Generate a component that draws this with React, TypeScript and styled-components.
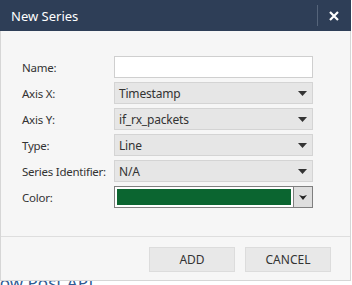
import { Fragment } from 'react';
import styled, { createGlobalStyle } from 'styled-components';

const GlobalStyle = createGlobalStyle`
  body {
    margin: 0;
    background: #ffffff;
    font-family: 'Noto Sans', 'Open Sans', sans-serif;
  }
`;

const Page = styled.div`
  position: relative;
  width: 352px;
  height: 285px;
  overflow: hidden;
  background: #ffffff;
`;

const PageLink = styled.a`
  display: block;
  white-space: nowrap;
  padding: 271px 0 0 0;
  margin-left: -20px;
  font-size: 17px;
  color: #2f5b93;
  text-decoration: none;
`;

const Dialog = styled.div`
  position: absolute;
  top: 0;
  left: 0;
  width: 351px;
  height: 281px;
  box-sizing: border-box;
  border: 1px solid #d6d6d6;
  border-top: none;
  background: #f6f6f6;
  display: flex;
  flex-direction: column;
`;

const Header = styled.div`
  height: 31px;
  background: #2e3e57;
  display: flex;
  align-items: center;
  justify-content: space-between;
  padding-left: 11px;
  margin: 0 -1px;
`;

const Title = styled.span`
  color: #ffffff;
  font-size: 13px;
`;

const CloseButton = styled.button`
  width: 33px;
  height: 21px;
  padding: 0;
  margin-right: 1px;
  border: none;
  border-left: 1px solid #55647a;
  background: transparent;
  display: flex;
  align-items: center;
  justify-content: center;
  cursor: pointer;
`;

const Body = styled.div`
  padding: 25px 37px 28px 21px;
  border-bottom: 1px solid #dedede;
`;

const Form = styled.div`
  display: grid;
  grid-template-columns: 92px 1fr;
  grid-auto-rows: 22px;
  row-gap: 4px;
  align-items: center;
`;

const Label = styled.label`
  font-size: 11.5px;
  letter-spacing: -0.25px;
  white-space: nowrap;
  color: #333333;
`;

const TextInput = styled.input`
  height: 22px;
  box-sizing: border-box;
  border: 1px solid #cfcfcf;
  background: #ffffff;
  font-size: 12px;
  padding: 0 5px;
  outline: none;
`;

const Select = styled.div`
  height: 22px;
  box-sizing: border-box;
  border: 1px solid #d4d4d4;
  background: #e6e6e6;
  display: flex;
  align-items: center;
  justify-content: space-between;
  padding: 0 5px 0 4px;
  font-size: 12px;
  letter-spacing: -0.2px;
  color: #333333;
`;

const ColorField = styled.div`
  height: 22px;
  box-sizing: border-box;
  border: 1px solid #7f7f7f;
  background: #ffffff;
  display: flex;
`;

const Swatch = styled.div<{ $color: string }>`
  flex: 1;
  margin: 2px;
  background: ${(p) => p.$color};
`;

const ColorButton = styled.div`
  width: 18px;
  border-left: 1px solid #7f7f7f;
  background: #dedede;
  display: flex;
  align-items: center;
  justify-content: center;
`;

const Footer = styled.div`
  flex: 1;
  display: flex;
  justify-content: flex-end;
  align-items: flex-start;
  gap: 10px;
  padding: 10px 19px 0 0;
`;

const Button = styled.button`
  width: 86px;
  height: 25px;
  border: 1px solid #dcdcdc;
  background: #e8e8e8;
  font-family: 'Noto Sans', 'Open Sans', sans-serif;
  font-size: 12px;
  color: #333333;
  cursor: pointer;
`;

const Caret = () => (
  <svg width="9" height="5" viewBox="0 0 9 5">
    <path d="M0 0 L9 0 L4.5 5 Z" fill="#333333" />
  </svg>
);

const Chevron = () => (
  <svg width="8" height="5" viewBox="0 0 8 5">
    <path d="M0 0 L4 1.3 L8 0 L4 5 Z" fill="#222222" />
  </svg>
);

const selects = [
  { label: 'Axis X:', value: 'Timestamp' },
  { label: 'Axis Y:', value: 'if_rx_packets' },
  { label: 'Type:', value: 'Line' },
  { label: 'Series Identifier:', value: 'N/A' },
];

const App = () => {
  return (
    <Page>
      <GlobalStyle />
      <PageLink href="#">Show Post API</PageLink>
      <Dialog>
        <Header>
          <Title>New Series</Title>
          <CloseButton aria-label="Close">
            <svg width="10" height="10" viewBox="0 0 10 10">
              <path d="M1 1 L9 9 M9 1 L1 9" stroke="#ffffff" strokeWidth="2.2" />
            </svg>
          </CloseButton>
        </Header>
        <Body>
          <Form>
            <Label>Name:</Label>
            <TextInput type="text" />
            {selects.map((s) => (
              <Fragment key={s.label}>
                <Label>{s.label}</Label>
                <Select>
                  <span>{s.value}</span>
                  <Caret />
                </Select>
              </Fragment>
            ))}
            <Label>Color:</Label>
            <ColorField>
              <Swatch $color="#0b6530" />
              <ColorButton>
                <Chevron />
              </ColorButton>
            </ColorField>
          </Form>
        </Body>
        <Footer>
          <Button>ADD</Button>
          <Button>CANCEL</Button>
        </Footer>
      </Dialog>
    </Page>
  );
};

export default App;
